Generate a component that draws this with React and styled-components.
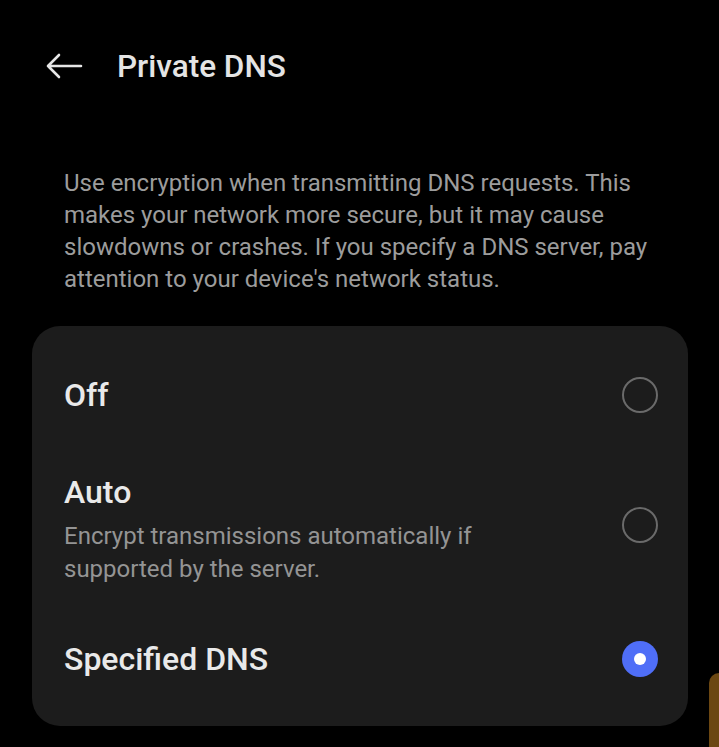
import styled, { createGlobalStyle } from "styled-components";

const GlobalStyle = createGlobalStyle`
  html, body {
    margin: 0;
    padding: 0;
    background: #000;
  }
  body {
    font-family: Roboto, "Noto Sans", sans-serif;
    -webkit-font-smoothing: antialiased;
  }
`;

const options = [
  { key: "off", title: "Off", pad: "49px 0 49px" },
  {
    key: "auto",
    title: "Auto",
    sub: "Encrypt transmissions automatically if supported by the server.",
    pad: "8px 0 6px",
  },
  { key: "specified", title: "Specified DNS", pad: "47px 0 47px" },
];

export default function App() {
  const selected = "specified";

  return (
    <Page>
      <GlobalStyle />
      <Header>
        <BackButton aria-label="Back">
          <svg width="38" height="26" viewBox="0 0 38 26" fill="none">
            <path
              d="M36 13H3M14 2L3 13l11 11"
              stroke="#e6e6e6"
              strokeWidth="2.6"
              strokeLinecap="round"
              strokeLinejoin="round"
            />
          </svg>
        </BackButton>
        <Title>Private DNS</Title>
      </Header>

      <Description>
        Use encryption when transmitting DNS requests. This makes your network
        more secure, but it may cause slowdowns or crashes. If you specify a
        DNS server, pay attention to your device's network status.
      </Description>

      <Card>
        {options.map((o) => (
          <Row key={o.key} $pad={o.pad}>
            <TextBlock>
              <RowTitle>{o.title}</RowTitle>
              {o.sub && <RowSub>{o.sub}</RowSub>}
            </TextBlock>
            <Radio $checked={o.key === selected} $lift={o.sub ? 8 : 0} />
          </Row>
        ))}
      </Card>

      <EdgeTab />
    </Page>
  );
}

const Page = styled.div`
  position: relative;
  width: 719px;
  height: 747px;
  overflow: hidden;
  background: #000;
`;

const Header = styled.div`
  display: flex;
  align-items: center;
  height: 132px;
  padding-left: 45px;
  box-sizing: border-box;
`;

const BackButton = styled.div`
  display: flex;
  align-items: center;
  width: 38px;
  height: 26px;
  margin-right: 34px;
`;

const Title = styled.h1`
  margin: 0;
  font-size: 31.5px;
  font-weight: 500;
  color: #e4e4e4;
`;

const Description = styled.p`
  margin: 35px 0 31px;
  padding: 0 64px;
  font-size: 24px;
  line-height: 32px;
  color: #9c9c9c;
`;

const Card = styled.div`
  margin: 0 31px 0 32px;
  padding: 0 30px 0 32px;
  background: #1c1c1c;
  border-radius: 28px;
`;

const Row = styled.div`
  display: flex;
  align-items: center;
  justify-content: space-between;
  padding: ${(p) => p.$pad};
`;

const TextBlock = styled.div`
  display: flex;
  flex-direction: column;
  max-width: 460px;
`;

const RowTitle = styled.div`
  font-size: 32px;
  font-weight: 500;
  line-height: 40px;
  color: #e9e9e9;
`;

const RowSub = styled.div`
  margin-top: 8px;
  font-size: 24px;
  line-height: 33px;
  color: #949494;
`;

const Radio = styled.div`
  position: relative;
  flex-shrink: 0;
  width: 36px;
  height: 36px;
  margin-bottom: ${(p) => p.$lift}px;
  border-radius: 50%;
  box-sizing: border-box;
  border: ${(p) => (p.$checked ? "none" : "2px solid #6a6a6a")};
  background: ${(p) => (p.$checked ? "#4f6ef7" : "transparent")};

  &::after {
    content: "";
    display: ${(p) => (p.$checked ? "block" : "none")};
    position: absolute;
    left: 12px;
    top: 12px;
    width: 12px;
    height: 12px;
    border-radius: 50%;
    background: #fff;
  }
`;

const EdgeTab = styled.div`
  position: absolute;
  right: 0;
  top: 673px;
  width: 10px;
  height: 80px;
  background: #6b4712;
  border-top-left-radius: 10px;
`;
